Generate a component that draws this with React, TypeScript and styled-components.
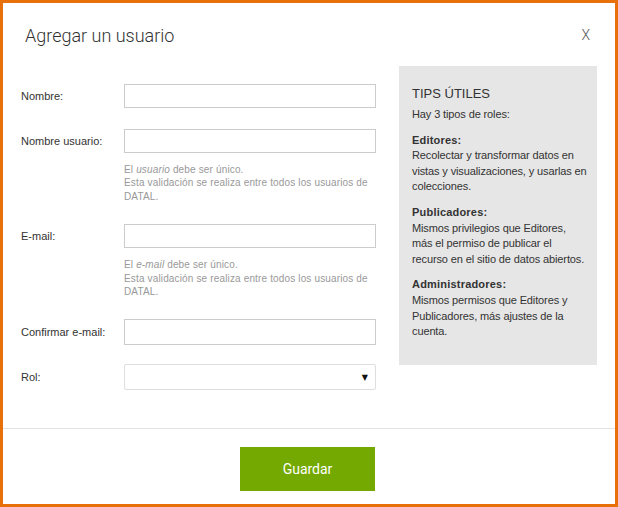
import styled, { createGlobalStyle } from 'styled-components';

const Global = createGlobalStyle`
  html, body {
    margin: 0;
    padding: 0;
    background: #fff;
  }
  * {
    box-sizing: border-box;
  }
`;

const Modal = styled.div`
  width: 618px;
  height: 507px;
  border: 3px solid #e8700b;
  background: #fff;
  display: flex;
  flex-direction: column;
  font-family: "Liberation Sans", Arial, sans-serif;
  color: #333;
`;

const Header = styled.div`
  height: 63px;
  display: flex;
  justify-content: space-between;
  align-items: flex-start;
  padding: 21px 25px 0 22px;
`;

const Title = styled.h1`
  margin: 0;
  font-family: Roboto, "Liberation Sans", sans-serif;
  font-weight: 300;
  font-size: 18px;
  line-height: 24px;
  color: #333;
`;

const Close = styled.button`
  border: 0;
  background: none;
  padding: 0;
  font-family: Roboto, "Liberation Sans", sans-serif;
  font-weight: 300;
  font-size: 14px;
  line-height: 22px;
  color: #555;
  cursor: pointer;
`;

const Body = styled.div`
  flex: 1;
  display: flex;
  align-items: flex-start;
  padding: 0 18px;
`;

const Form = styled.div`
  width: 355px;
  padding-top: 18px;
  display: flex;
  flex-direction: column;
  gap: 21px;
`;

const Row = styled.div<{ $pull?: number }>`
  display: grid;
  grid-template-columns: 103px 252px;
  align-items: start;
  margin-top: ${p => -(p.$pull ?? 0)}px;
`;

const Label = styled.label<{ $h: number }>`
  font-size: 11px;
  line-height: ${p => p.$h}px;
  color: #333;
`;

const Input = styled.input<{ $h: number }>`
  height: ${p => p.$h}px;
  width: 252px;
  border: 1px solid #cccccc;
  border-radius: 0;
  background: #fff;
  outline: none;
  padding: 0 6px;
  font: inherit;
`;

const Help = styled.p`
  grid-column: 2;
  margin: 10px 0 0;
  font-size: 10px;
  line-height: 13.4px;
  color: #999;
  letter-spacing: 0.15px;
`;

const SelectBox = styled.div`
  height: 26px;
  border: 1px solid #dedede;
  border-radius: 2px;
  background: #fff;
  display: flex;
  align-items: center;
  justify-content: flex-end;
  padding-right: 7px;
`;

const Arrow = styled.span`
  font-family: "DejaVu Sans", sans-serif;
  font-size: 8px;
  color: #111;
`;

const Tips = styled.aside`
  width: 198px;
  height: 299px;
  margin-left: 23px;
  background: #e6e6e6;
  padding: 20px 8px 0 13px;
`;

const TipsTitle = styled.h2`
  margin: 0;
  font-size: 13px;
  font-weight: 400;
  line-height: 16px;
  color: #333;
`;

const TipsText = styled.p<{ $mt: number }>`
  margin: ${p => p.$mt}px 0 0;
  font-size: 11px;
  line-height: 15.6px;
  letter-spacing: -0.12px;
  color: #333;
`;

const Role = styled.strong`
  display: block;
  font-weight: 700;
  letter-spacing: 0.2px;
`;

const Footer = styled.div`
  height: 76px;
  border-top: 1px solid #e3e3e3;
  display: flex;
  justify-content: center;
  padding-top: 18px;
`;

const SaveButton = styled.button`
  width: 135px;
  height: 44px;
  border: 0;
  background: #73a900;
  color: #fff;
  font-family: Roboto, "Liberation Sans", sans-serif;
  font-size: 14px;
  margin-right: 3px;
  cursor: pointer;
`;

const roles = [
  { name: 'Editores:', text: 'Recolectar y transformar datos en vistas y visualizaciones, y usarlas en colecciones.' },
  { name: 'Publicadores:', text: 'Mismos privilegios que Editores, más el permiso de publicar el recurso en el sitio de datos abiertos.' },
  { name: 'Administradores:', text: 'Mismos permisos que Editores y Publicadores, más ajustes de la cuenta.' },
];

export default function App() {
  return (
    <>
      <Global />
      <Modal>
        <Header>
          <Title>Agregar un usuario</Title>
          <Close>X</Close>
        </Header>
        <Body>
          <Form>
            <Row>
              <Label $h={24}>Nombre:</Label>
              <Input $h={24} />
            </Row>
            <Row>
              <Label $h={24}>Nombre usuario:</Label>
              <Input $h={24} />
              <Help>
                El <em>usuario</em> debe ser único.<br />
                Esta validación se realiza entre todos los usuarios de DATAL.
              </Help>
            </Row>
            <Row>
              <Label $h={24}>E-mail:</Label>
              <Input $h={24} />
              <Help>
                El <em>e-mail</em> debe ser único.<br />
                Esta validación se realiza entre todos los usuarios de DATAL.
              </Help>
            </Row>
            <Row>
              <Label $h={26}>Confirmar e-mail:</Label>
              <Input $h={26} />
            </Row>
            <Row $pull={2}>
              <Label $h={26}>Rol:</Label>
              <SelectBox>
                <Arrow>▼</Arrow>
              </SelectBox>
            </Row>
          </Form>
          <Tips>
            <TipsTitle>TIPS ÚTILES</TipsTitle>
            <TipsText $mt={5}>Hay 3 tipos de roles:</TipsText>
            {roles.map(r => (
              <TipsText key={r.name} $mt={10}>
                <Role>{r.name}</Role>
                {r.text}
              </TipsText>
            ))}
          </Tips>
        </Body>
        <Footer>
          <SaveButton>Guardar</SaveButton>
        </Footer>
      </Modal>
    </>
  );
}
